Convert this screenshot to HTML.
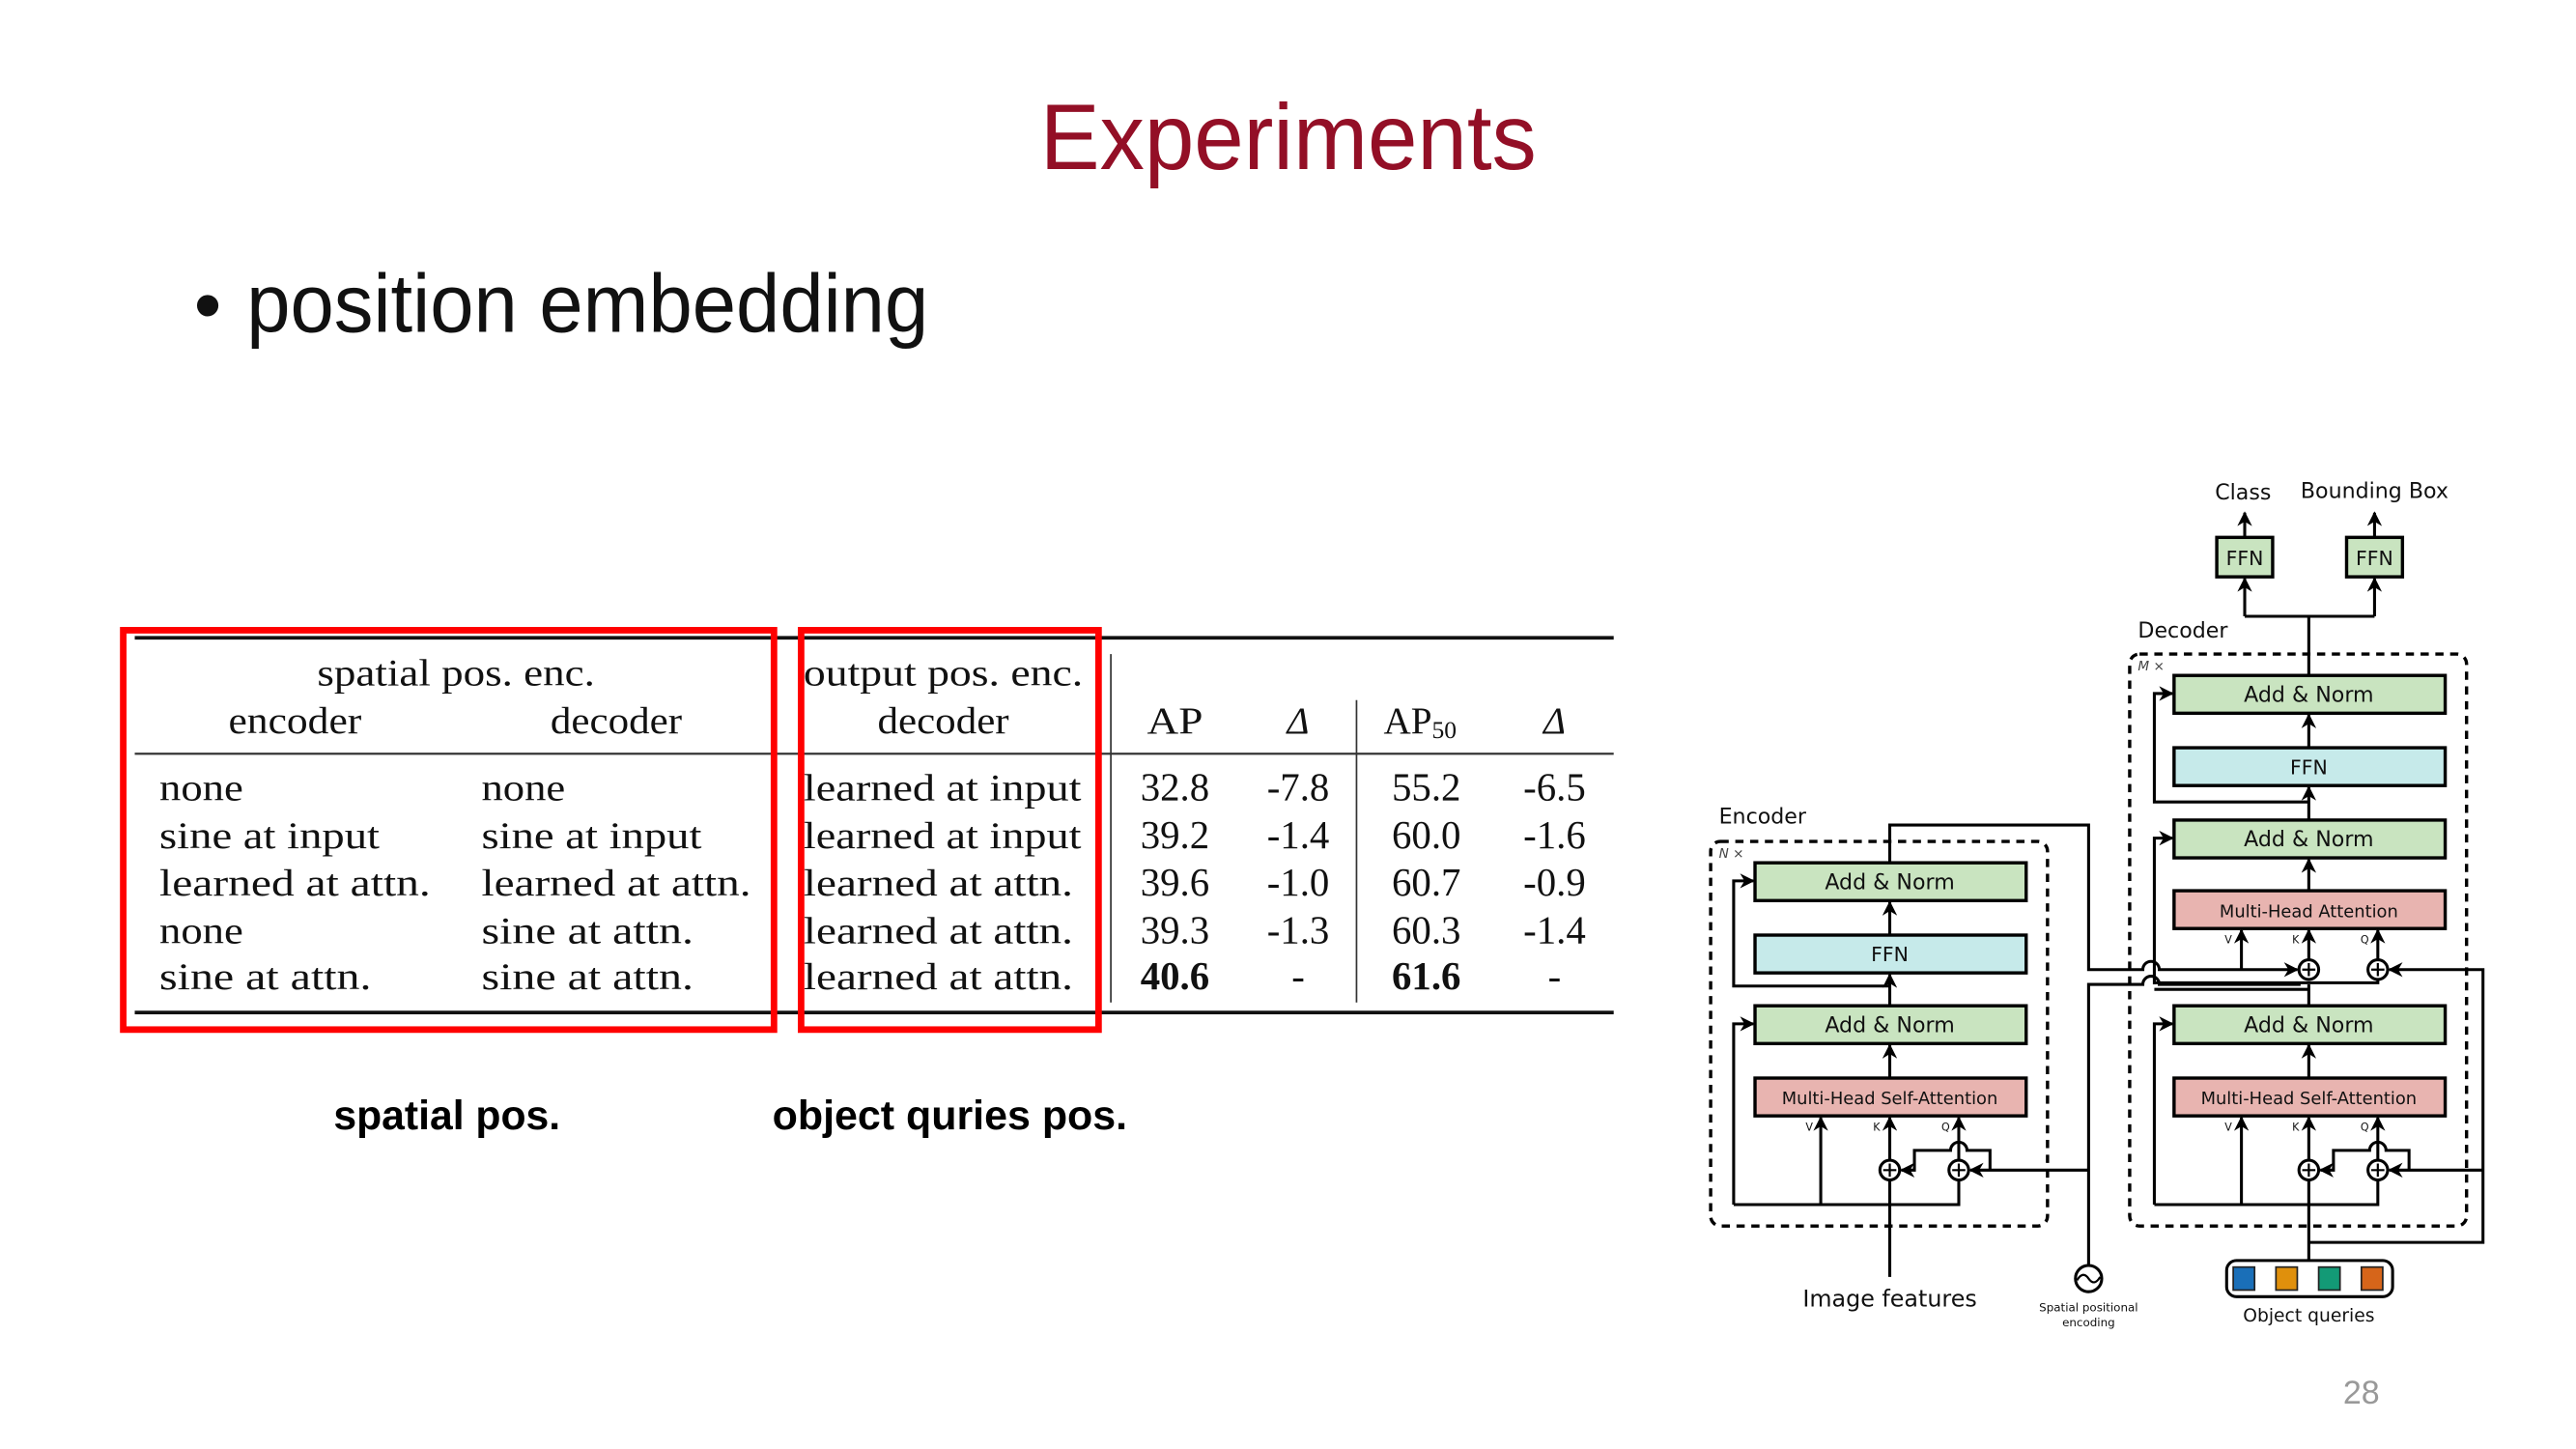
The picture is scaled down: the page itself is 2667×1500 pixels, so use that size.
<!DOCTYPE html>
<html><head><meta charset="utf-8"><style>
html,body{margin:0;padding:0;background:#fff;overflow:hidden}
svg{display:block}
.s{font-family:"Liberation Serif",serif;font-size:23px;fill:#111}
.d{font-family:"DejaVu Sans","Liberation Sans",sans-serif;fill:#111}
</style></head><body>
<svg width="2667" height="1500" viewBox="0 0 1567.6 881.7" preserveAspectRatio="none" xmlns="http://www.w3.org/2000/svg">
<defs>
<marker id="a" viewBox="0 0 10 10" refX="9" refY="5" markerWidth="5" markerHeight="5" orient="auto-start-reverse">
<path d="M0,0 L10,5 L0,10 L3,5 z" fill="#000"/></marker>
</defs>
<rect width="1567.6" height="881.7" fill="#fff"/>
<text x="633" y="103" font-family="Liberation Sans,sans-serif" font-size="57" fill="#930f26" textLength="302" lengthAdjust="spacingAndGlyphs">Experiments</text>
<text x="118" y="202" font-family="Liberation Sans,sans-serif" font-size="48" fill="#111">•</text>
<text x="150" y="202" font-family="Liberation Sans,sans-serif" font-size="50" fill="#111" textLength="415" lengthAdjust="spacingAndGlyphs">position embedding</text>

<rect x="82" y="387" width="900" height="2.2" fill="#111"/>
<rect x="82" y="458" width="900" height="1.3" fill="#333"/>
<rect x="82" y="615" width="900" height="2.2" fill="#111"/>
<rect x="675.5" y="398" width="1" height="212" fill="#333"/>
<rect x="825" y="426" width="1" height="184" fill="#333"/>

<g class="s">
<text x="193" y="417" textLength="169" lengthAdjust="spacingAndGlyphs">spatial pos. enc.</text>
<text x="139" y="446" textLength="81" lengthAdjust="spacingAndGlyphs">encoder</text>
<text x="335" y="446" textLength="80" lengthAdjust="spacingAndGlyphs">decoder</text>
<text x="489" y="417" textLength="170" lengthAdjust="spacingAndGlyphs">output pos. enc.</text>
<text x="534" y="446" textLength="80" lengthAdjust="spacingAndGlyphs">decoder</text>
<text x="698" y="446" textLength="34" lengthAdjust="spacingAndGlyphs">AP</text>
<text x="790" y="446" text-anchor="middle" font-style="italic">Δ</text>
<text x="842" y="446">AP<tspan font-size="15" dy="3">50</tspan></text>
<text x="946" y="446" text-anchor="middle" font-style="italic">Δ</text>

<text x="97" y="487" textLength="51" lengthAdjust="spacingAndGlyphs">none</text>
<text x="97" y="516" textLength="134" lengthAdjust="spacingAndGlyphs">sine at input</text>
<text x="97" y="545" textLength="165" lengthAdjust="spacingAndGlyphs">learned at attn.</text>
<text x="97" y="574" textLength="51" lengthAdjust="spacingAndGlyphs">none</text>
<text x="97" y="602" textLength="129" lengthAdjust="spacingAndGlyphs">sine at attn.</text>
<text x="293" y="487" textLength="51" lengthAdjust="spacingAndGlyphs">none</text>
<text x="293" y="516" textLength="134" lengthAdjust="spacingAndGlyphs">sine at input</text>
<text x="293" y="545" textLength="164" lengthAdjust="spacingAndGlyphs">learned at attn.</text>
<text x="293" y="574" textLength="129" lengthAdjust="spacingAndGlyphs">sine at attn.</text>
<text x="293" y="602" textLength="129" lengthAdjust="spacingAndGlyphs">sine at attn.</text>
<text x="489" y="487" textLength="169" lengthAdjust="spacingAndGlyphs">learned at input</text>
<text x="489" y="516" textLength="169" lengthAdjust="spacingAndGlyphs">learned at input</text>
<text x="489" y="545" textLength="164" lengthAdjust="spacingAndGlyphs">learned at attn.</text>
<text x="489" y="574" textLength="164" lengthAdjust="spacingAndGlyphs">learned at attn.</text>
<text x="489" y="602" textLength="164" lengthAdjust="spacingAndGlyphs">learned at attn.</text>
<g text-anchor="middle" font-size="24">
<text x="715" y="487">32.8</text><text x="715" y="516">39.2</text><text x="715" y="545">39.6</text><text x="715" y="574">39.3</text><text x="715" y="602" font-weight="bold">40.6</text>
<text x="790" y="487">-7.8</text><text x="790" y="516">-1.4</text><text x="790" y="545">-1.0</text><text x="790" y="574">-1.3</text><text x="790" y="602">-</text>
<text x="868" y="487">55.2</text><text x="868" y="516">60.0</text><text x="868" y="545">60.7</text><text x="868" y="574">60.3</text><text x="868" y="602" font-weight="bold">61.6</text>
<text x="946" y="487">-6.5</text><text x="946" y="516">-1.6</text><text x="946" y="545">-0.9</text><text x="946" y="574">-1.4</text><text x="946" y="602">-</text>
</g>
</g>
<rect x="75" y="383.5" width="396" height="243" fill="none" stroke="#ff0000" stroke-width="4"/>
<rect x="487.5" y="383.5" width="181" height="243" fill="none" stroke="#ff0000" stroke-width="4"/>

<text x="272" y="687" text-anchor="middle" font-family="Liberation Sans,sans-serif" font-weight="bold" font-size="25" fill="#000" textLength="138" lengthAdjust="spacingAndGlyphs">spatial pos.</text>
<text x="578" y="687" text-anchor="middle" font-family="Liberation Sans,sans-serif" font-weight="bold" font-size="25" fill="#000" textLength="216" lengthAdjust="spacingAndGlyphs">object quries pos.</text>

<text x="1437" y="854" text-anchor="middle" font-family="Liberation Sans,sans-serif" font-size="20" fill="#999">28</text>

<g class="d" font-size="13">
<text x="1365" y="304" text-anchor="middle">Class</text>
<text x="1445" y="303" text-anchor="middle">Bounding Box</text>
<text x="1301" y="388">Decoder</text>
<text x="1046" y="501">Encoder</text>
<text x="1046" y="522" font-size="8" font-style="italic" fill="#444">N ×</text>
<text x="1301" y="408" font-size="8" font-style="italic" fill="#444">M ×</text>
</g>
<g fill="none" stroke="#000" stroke-width="2">
<rect x="1349" y="327" width="34" height="24" fill="#c9e4c0"/>
<rect x="1428" y="327" width="34" height="24" fill="#c9e4c0"/>
<rect x="1296" y="398" width="205" height="348" rx="6" stroke-dasharray="5,4"/>
<rect x="1041" y="512" width="205" height="234" rx="6" stroke-dasharray="5,4"/>
<rect x="1323" y="411" width="165" height="23" fill="#c9e4c0"/>
<rect x="1323" y="455" width="165" height="23" fill="#c6eaea"/>
<rect x="1323" y="499" width="165" height="23" fill="#c9e4c0"/>
<rect x="1323" y="542" width="165" height="23" fill="#e8b4b0"/>
<rect x="1323" y="612" width="165" height="23" fill="#c9e4c0"/>
<rect x="1323" y="656" width="165" height="23" fill="#e8b4b0"/>
<rect x="1068" y="525" width="165" height="23" fill="#c9e4c0"/>
<rect x="1068" y="569" width="165" height="23" fill="#c6eaea"/>
<rect x="1068" y="612" width="165" height="23" fill="#c9e4c0"/>
<rect x="1068" y="656" width="165" height="23" fill="#e8b4b0"/>
</g>
<g class="d" text-anchor="middle">
<text x="1366" y="344" font-size="12">FFN</text>
<text x="1445" y="344" font-size="12">FFN</text>
<text x="1405" y="427" font-size="13">Add &amp; Norm</text>
<text x="1405" y="471" font-size="12">FFN</text>
<text x="1405" y="515" font-size="13">Add &amp; Norm</text>
<text x="1405" y="558" font-size="10.5">Multi-Head Attention</text>
<text x="1405" y="628" font-size="13">Add &amp; Norm</text>
<text x="1405" y="672" font-size="10.5">Multi-Head Self-Attention</text>
<text x="1150" y="541" font-size="13">Add &amp; Norm</text>
<text x="1150" y="585" font-size="12">FFN</text>
<text x="1150" y="628" font-size="13">Add &amp; Norm</text>
<text x="1150" y="672" font-size="10.5">Multi-Head Self-Attention</text>
<text x="1150" y="795" font-size="14">Image features</text>
<text x="1271" y="798" font-size="7">Spatial positional</text>
<text x="1271" y="807" font-size="7">encoding</text>
<text x="1405" y="804" font-size="11">Object queries</text>
<g font-size="6.5"><text x="1101" y="688">V</text><text x="1142" y="688">K</text><text x="1184" y="688">Q</text>
<text x="1356" y="688">V</text><text x="1397" y="688">K</text><text x="1439" y="688">Q</text>
<text x="1356" y="574">V</text><text x="1397" y="574">K</text><text x="1439" y="574">Q</text></g>
</g>
<g fill="none" stroke="#000" stroke-width="1.8">
<path d="M1405 411 V375 M1366 375 H1445"/>
<path d="M1366 375 V352" marker-end="url(#a)"/>
<path d="M1445 375 V352" marker-end="url(#a)"/>
<path d="M1366 327 V312" marker-end="url(#a)"/>
<path d="M1445 327 V312" marker-end="url(#a)"/>
<path d="M1405 455 V435" marker-end="url(#a)"/>
<path d="M1405 499 V479" marker-end="url(#a)"/>
<path d="M1405 542 V523" marker-end="url(#a)"/>
<path d="M1405 488 H1311 V422 H1322" marker-end="url(#a)"/>
<path d="M1405 612 V599" />
<path d="M1405 656 V636" marker-end="url(#a)"/>
<path d="M1405 584 V566" marker-end="url(#a)"/>
<path d="M1447 584 V566" marker-end="url(#a)"/>
<path d="M1364 590 V566" marker-end="url(#a)"/>
<path d="M1311 599 V510 H1322" marker-end="url(#a)"/>
<path d="M1405 602 H1311"/>
<path d="M1311 598 H1447 V596"/>
<path d="M1311 733 V623 H1322" marker-end="url(#a)"/>
<path d="M1311 733 H1447 V718"/>
<path d="M1364 733 V680" marker-end="url(#a)"/>
<path d="M1405 706 V680" marker-end="url(#a)"/>
<path d="M1447 706 V680" marker-end="url(#a)"/>
<path d="M1405 768 V718"/>
<path d="M1405 756 H1511 V590 H1454" marker-end="url(#a)"/>
<path d="M1511 712 H1454" marker-end="url(#a)"/>
<path d="M1466 712 V700 H1452 a5 5 0 0 0 -10 0 H1420 V712 H1412" marker-end="url(#a)"/>
<path d="M1150 777 V718"/>
<path d="M1150 706 V680" marker-end="url(#a)"/>
<path d="M1192 706 V680" marker-end="url(#a)"/>
<path d="M1055 733 H1192 V718"/>
<path d="M1055 733 V623 H1067" marker-end="url(#a)"/>
<path d="M1108 733 V680" marker-end="url(#a)"/>
<path d="M1150 656 V636" marker-end="url(#a)"/>
<path d="M1150 612 V593" marker-end="url(#a)"/>
<path d="M1150 569 V549" marker-end="url(#a)"/>
<path d="M1150 600 H1055 V536 H1067" marker-end="url(#a)"/>
<path d="M1271 712 H1199" marker-end="url(#a)"/>
<path d="M1211 712 V700 H1197 a5 5 0 0 0 -10 0 H1165 V712 H1157" marker-end="url(#a)"/>
<path d="M1150 525 V502 H1271 V590 H1304 a5 5 0 0 1 10 0 H1398" marker-end="url(#a)"/>
<path d="M1271 772 V599 H1304 a5 5 0 0 1 10 0 H1400"/>
</g>
<g fill="#fff" stroke="#000" stroke-width="1.8">
<circle cx="1150" cy="712" r="6"/><circle cx="1192" cy="712" r="6"/>
<circle cx="1405" cy="712" r="6"/><circle cx="1447" cy="712" r="6"/>
<circle cx="1405" cy="590" r="6"/><circle cx="1447" cy="590" r="6"/>
<circle cx="1271" cy="778" r="8"/>
<rect x="1355" y="767" width="101" height="22" rx="6"/>
</g>
<g stroke="#000" stroke-width="1.3" fill="none">
<path d="M1150 708 V716 M1146 712 H1154 M1192 708 V716 M1188 712 H1196 M1405 708 V716 M1401 712 H1409 M1447 708 V716 M1443 712 H1451 M1405 586 V594 M1401 590 H1409 M1447 586 V594 M1443 590 H1451"/>
<path d="M1264 779 q3.5 -6 7 -1 t7 -1"/>
</g>
<g stroke="#222" stroke-width="1">
<rect x="1359" y="771" width="13" height="14" fill="#1a6fb8"/>
<rect x="1385" y="771" width="13" height="14" fill="#e0900c"/>
<rect x="1411" y="771" width="13" height="14" fill="#139a76"/>
<rect x="1437" y="771" width="13" height="14" fill="#d6651a"/>
</g>
</svg>
</body></html>
